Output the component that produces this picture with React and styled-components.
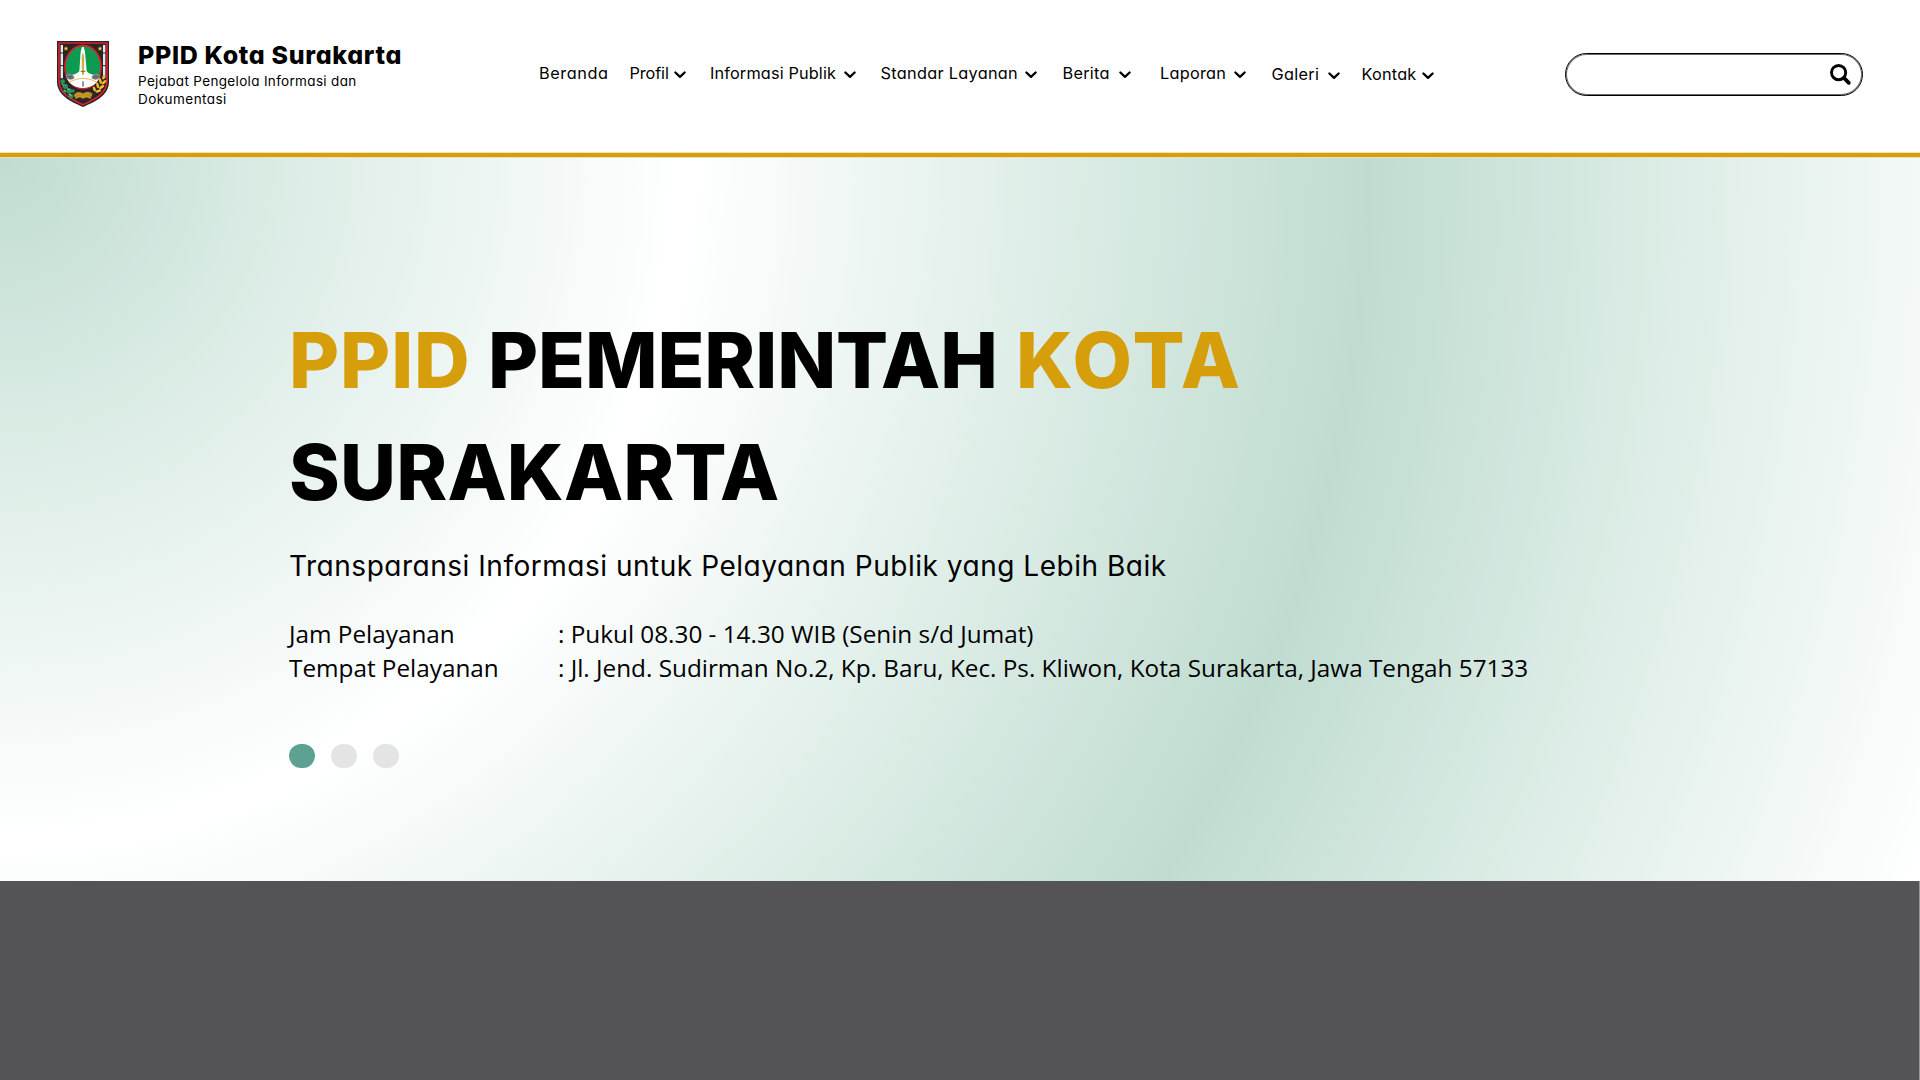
import React from "react";
import styled, { createGlobalStyle } from "styled-components";

const GlobalStyle = createGlobalStyle`
  *, *::before, *::after { box-sizing: border-box; }
  body {
    margin: 0;
    background: #fff;
    color: #000;
    font-family: "Inter", sans-serif;
    font-feature-settings: "cv11";
    overflow: hidden;
  }
  h1, p { margin: 0; }
`;

const Page = styled.div`
  width: 1920px;
  height: 1080px;
  display: flex;
  flex-direction: column;
`;

const Header = styled.header`
  position: relative;
  z-index: 1;
  height: 157px;
  flex: none;
  display: flex;
  align-items: flex-start;
  padding: 0 57px;
  background: #fff;
  border-bottom: 4px solid #d69e0a;
  box-shadow: inset 0 -1px #f1e2b9, 0 1px #e9dfb8;
`;

const Brand = styled.div`
  width: 482px;
  flex: none;
  display: flex;
  gap: 29px;
  padding-top: 40px;
`;

const Emblem = styled.svg`
  width: 52px;
  height: 66px;
  margin-top: 1px;
  flex: none;
`;

const BrandText = styled.div`
  display: flex;
  flex-direction: column;
  gap: 2px;
`;

const BrandName = styled.div`
  font-size: 25px;
  line-height: 30px;
  font-weight: 760;
  letter-spacing: 0.66px;
  white-space: nowrap;
`;

const BrandLine = styled.span`
  display: block;
  font-size: 13.5px;
  line-height: 18px;
  letter-spacing: ${(p) => p.$tracking}px;
  white-space: nowrap;
`;

const Nav = styled.nav`
  display: flex;
  padding-top: 61px;
`;

const NavItem = styled.a`
  display: flex;
  align-items: center;
  justify-content: space-between;
  width: ${(p) => p.$width}px;
  height: 24px;
  margin-right: ${(p) => p.$after}px;
  margin-top: ${(p) => p.$drop || 0}px;
  font-size: 16.3px;
  line-height: 24px;
  letter-spacing: ${(p) => p.$tracking}px;
  white-space: nowrap;
`;

const Chevron = styled.svg`
  width: 12px;
  height: 8px;
  margin-top: 3px;
  flex: none;
`;

const Search = styled.div`
  width: 298px;
  height: 43px;
  margin: 53px 0 0 auto;
  display: flex;
  align-items: center;
  justify-content: flex-end;
  padding-right: 10px;
  border: 1px solid #000;
  border-radius: 22px;
  box-shadow: inset 0 0 0 1px #6a6a6a;
`;

const Hero = styled.main`
  height: 724px;
  flex: none;
  display: flex;
  flex-direction: column;
  padding: 147px 0 0 289px;
  background: radial-gradient(
    circle farthest-corner at 0 0,
    #c0dcd1 0%,
    #d8eae3 12%,
    #fff 33.4%,
    #d8eae3 54%,
    #c0dcd1 66.7%,
    #d8eae3 79%,
    #fff 100%
  );
`;

const Title = styled.h1`
  font-size: 77px;
  line-height: 112px;
  font-weight: 760;
  white-space: nowrap;
`;

const TitleRow = styled.span`
  display: flex;
`;

const Word = styled.span`
  width: ${(p) => p.$width}px;
  color: ${(p) => (p.$gold ? "#d69e0a" : "#000")};
  letter-spacing: ${(p) => p.$tracking}px;
`;

const Tagline = styled.p`
  margin-top: 18px;
  font-size: 28px;
  line-height: 41px;
  letter-spacing: 0.52px;
`;

const Info = styled.div`
  display: grid;
  grid-template-columns: 269px auto;
  margin-top: 30px;
  font-family: "Open Sans", sans-serif;
  font-size: 24.3px;
  line-height: 34px;
  white-space: nowrap;
`;

const Dots = styled.div`
  display: flex;
  gap: 16px;
  margin-top: 59px;
`;

const Dot = styled.span`
  width: 26px;
  height: 24px;
  border-radius: 12px;
  background: ${(p) => (p.$active ? "#5da193" : "#e4e4e4")};
`;

const Footer = styled.footer`
  flex: 1;
  background: #545456;
  border-right: 1px solid #98989a;
`;

const navItems = [
  { label: "Beranda", width: 69, after: 21.5, tracking: 0.58, plain: true },
  { label: "Profil", width: 56, after: 24.5, tracking: -0.12 },
  { label: "Informasi Publik", width: 146, after: 24.5, tracking: 0.14 },
  { label: "Standar Layanan", width: 156, after: 26, tracking: 0.3 },
  { label: "Berita", width: 68, after: 29.5, tracking: 0.26 },
  { label: "Laporan", width: 85.5, after: 26, tracking: 0.25 },
  { label: "Galeri", width: 68.5, after: 21.5, tracking: 0.3, drop: 1 },
  { label: "Kontak", width: 72.5, after: 0, tracking: 0.2, drop: 1 },
];

const SHIELD =
  "M0 0H156V124C154 164 116 182 78 198C40 182 2 164 0 124Z";

function CityEmblem() {
  return (
    <Emblem viewBox="0 0 156 198">
      <path d={SHIELD} fill="#2b2024" />
      <path
        d="M6 6H150V123C148 158 112 176 78 191C44 176 8 158 6 123Z"
        fill="#2b2426"
        stroke="#d8232e"
        strokeWidth="5"
      />
      <path d="M11 12H18V112H11Z M138 12H145V112H138Z" fill="#e9e7e7" />
      <path d="M9 36H21M9 74H21M135 36H147M135 74H147" stroke="#2b2426" strokeWidth="3" />
      <g fill="#f2c230">
        <path d="M27 15l2 5h5l-4 4 2 5-5-3-5 3 2-5-4-4h5z" />
        <path d="M129 15l2 5h5l-4 4 2 5-5-3-5 3 2-5-4-4h5z" />
      </g>
      <ellipse cx="78" cy="78" rx="54" ry="65" fill="#0d9a51" stroke="#d8232e" strokeWidth="5" />
      <path d="M27 103Q56 104 67 91L71 32L75 18H80L84 32L89 91Q100 104 129 103C125 127 104 141 78 141C52 141 31 127 27 103Z" fill="#fff" />
      <path d="M26 102q12-8 24 2q6 8-3 11q-11 3-19-4zM130 102q-12-8-24 2q-6 8 3 11q11 3 19-4z" fill="#85878b" />
      <path d="M29 106h17M110 106h17M34 111h13M109 111h13" stroke="#3d3f41" strokeWidth="2" />
      <path d="M37 123Q78 101 119 123" fill="none" stroke="#e3bc57" strokeWidth="3" />
      <path d="M78 37L81 50L80 90H76L75 50Z" fill="#e5b82d" stroke="#846819" strokeWidth="1" />
      <path d="M71 91H85M78 91V101" stroke="#9b7a20" strokeWidth="4" />
      <path d="M78 121V137" stroke="#333" strokeWidth="3" />
      <g fill="#28945b">
        <circle cx="17" cy="122" r="7" />
        <circle cx="25" cy="136" r="8" />
        <circle cx="37" cy="150" r="8" />
        <circle cx="42" cy="166" r="7" />
        <circle cx="23" cy="151" r="5" />
        <circle cx="48" cy="150" r="5" />
      </g>
      <path d="M14 129l6 4M30 143l8 3M22 146l5 5M34 160l9 3" stroke="#d9eee1" strokeWidth="2" />
      <g fill="#efbd2c">
        <ellipse cx="140" cy="108" rx="4" ry="8" transform="rotate(20 140 108)" />
        <ellipse cx="130" cy="120" rx="4" ry="9" transform="rotate(-15 130 120)" />
        <ellipse cx="141" cy="124" rx="4" ry="9" transform="rotate(50 141 124)" />
        <ellipse cx="122" cy="133" rx="4" ry="9" transform="rotate(-15 122 133)" />
        <ellipse cx="134" cy="138" rx="4" ry="9" transform="rotate(60 134 138)" />
        <ellipse cx="112" cy="144" rx="4" ry="8" transform="rotate(-20 112 144)" />
        <ellipse cx="124" cy="150" rx="4" ry="9" transform="rotate(70 124 150)" />
      </g>
      <path d="M50 161Q60 147 78 157Q95 147 107 159L100 174Q88 165 78 174Q66 165 56 175Z" fill="#b98a20" />
      <path d="M55 164Q67 153 78 164Q90 153 101 164M59 170Q69 161 78 169Q88 161 98 170" fill="none" stroke="#e9c451" strokeWidth="2" strokeDasharray="3 2" />
    </Emblem>
  );
}

function ChevronDown() {
  return (
    <Chevron viewBox="0 0 12 8">
      <path
        d="M1.4 1.5L6 5.9L10.6 1.5"
        fill="none"
        stroke="#000"
        strokeWidth="2.3"
        strokeLinecap="round"
        strokeLinejoin="round"
      />
    </Chevron>
  );
}

function SearchIcon() {
  return (
    <svg width="23" height="23" viewBox="0 0 23 23" fill="none" stroke="#000">
      <circle cx="9.6" cy="9.6" r="7.1" strokeWidth="2.9" />
      <path d="M14.9 14.9L19.8 19.8" strokeWidth="3.8" strokeLinecap="round" />
    </svg>
  );
}

export default function App() {
  return (
    <Page>
      <GlobalStyle />
      <Header>
        <Brand>
          <CityEmblem />
          <BrandText>
            <BrandName>PPID Kota Surakarta</BrandName>
            <p>
              <BrandLine $tracking={0.33}>Pejabat Pengelola Informasi dan</BrandLine>
              <BrandLine $tracking={0.45}>Dokumentasi</BrandLine>
            </p>
          </BrandText>
        </Brand>
        <Nav>
          {navItems.map((item) => (
            <NavItem
              key={item.label}
              $width={item.width}
              $after={item.after}
              $tracking={item.tracking}
              $drop={item.drop}
            >
              {item.label}
              {!item.plain && <ChevronDown />}
            </NavItem>
          ))}
        </Nav>
        <Search>
          <SearchIcon />
        </Search>
      </Header>
      <Hero>
        <Title>
          <TitleRow>
            <Word $gold $width={199} $tracking={0.9}>PPID</Word>
            <Word $width={528} $tracking={-0.1}>PEMERINTAH</Word>
            <Word $gold $width={240} $tracking={3}>KOTA</Word>
          </TitleRow>
          <TitleRow>
            <Word $width={520} $tracking={0.2}>SURAKARTA</Word>
          </TitleRow>
        </Title>
        <Tagline>Transparansi Informasi untuk Pelayanan Publik yang Lebih Baik</Tagline>
        <Info>
          <span>Jam Pelayanan</span>
          <span>: Pukul 08.30 - 14.30 WIB (Senin s/d Jumat)</span>
          <span>Tempat Pelayanan</span>
          <span>: Jl. Jend. Sudirman No.2, Kp. Baru, Kec. Ps. Kliwon, Kota Surakarta, Jawa Tengah 57133</span>
        </Info>
        <Dots>
          <Dot $active />
          <Dot />
          <Dot />
        </Dots>
      </Hero>
      <Footer />
    </Page>
  );
}
